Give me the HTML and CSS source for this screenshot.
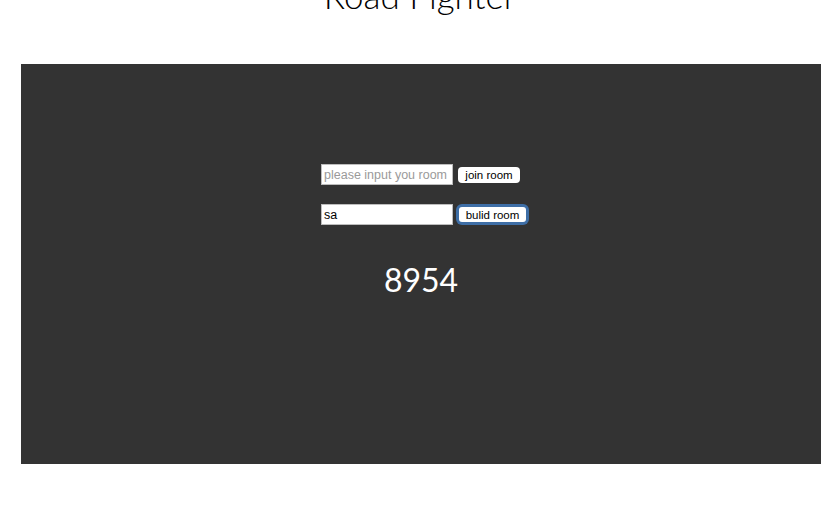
FILE: index.html
```html
<!DOCTYPE html>
<html>
<head>
<meta charset="utf-8">
<link rel="stylesheet" href="styles.css">
</head>
<body>
<h1 class="title">Road Fighter</h1>
<div class="stage">
  <div class="form">
    <div class="row">
      <input class="field" type="text" placeholder="please input you room">
      <button class="btn">join room</button>
    </div>
    <div class="row">
      <input class="field" type="text" value="sa">
      <button class="btn btn-focus">bulid room</button>
    </div>
  </div>
  <div class="room">8954</div>
</div>
</body>
</html>
```
FILE: styles.css
```css
html, body {
  margin: 0;
  padding: 0;
  background: #fff;
}
body {
  width: 840px;
  height: 516px;
  overflow: hidden;
  font-family: "Lato", "Liberation Sans", sans-serif;
}
.title {
  margin: 0;
  height: 64px;
  margin-top: -25px;
  font-family: "Lato", sans-serif;
  font-weight: 300;
  font-size: 35px;
  line-height: 40px;
  text-align: center;
  color: #000;
  box-sizing: border-box;
}
.stage {
  margin-top: 25px;
  margin-left: 21px;
  width: 800px;
  height: 400px;
  background: #333333;
  box-sizing: border-box;
  padding-top: 100px;
}
.form {
  padding-left: 300px;
  display: flex;
  flex-direction: column;
  gap: 19px;
}
.row {
  display: flex;
  align-items: center;
  gap: 5px;
  height: 21px;
}
.field {
  box-sizing: border-box;
  width: 132px;
  height: 21px;
  margin: 0;
  padding: 1px 2px;
  border: 1px solid #bdbdbd;
  background: #fff;
  font-family: "Liberation Sans", sans-serif;
  font-size: 12.5px;
  color: #000;
  outline: none;
}
.field::placeholder {
  color: #9a9a9a;
}
.btn {
  box-sizing: border-box;
  height: 16px;
  margin: 0;
  padding: 0 4px;
  border: none;
  border-radius: 4px;
  background: #fff;
  font-family: "Liberation Sans", sans-serif;
  font-size: 11.5px;
  line-height: 16px;
  color: #000;
}
.row .btn:not(.btn-focus) {
  width: 62px;
}
.btn-focus {
  margin-left: 1px;
  width: 67px;
  height: 15px;
  box-shadow: 0 0 0 3px #3e6ea6;
  border-radius: 3px;
}
.room {
  margin-top: 35px;
  text-align: center;
  color: #fff;
  font-family: "Lato", sans-serif;
  font-size: 32px;
  line-height: 40px;
}
```
